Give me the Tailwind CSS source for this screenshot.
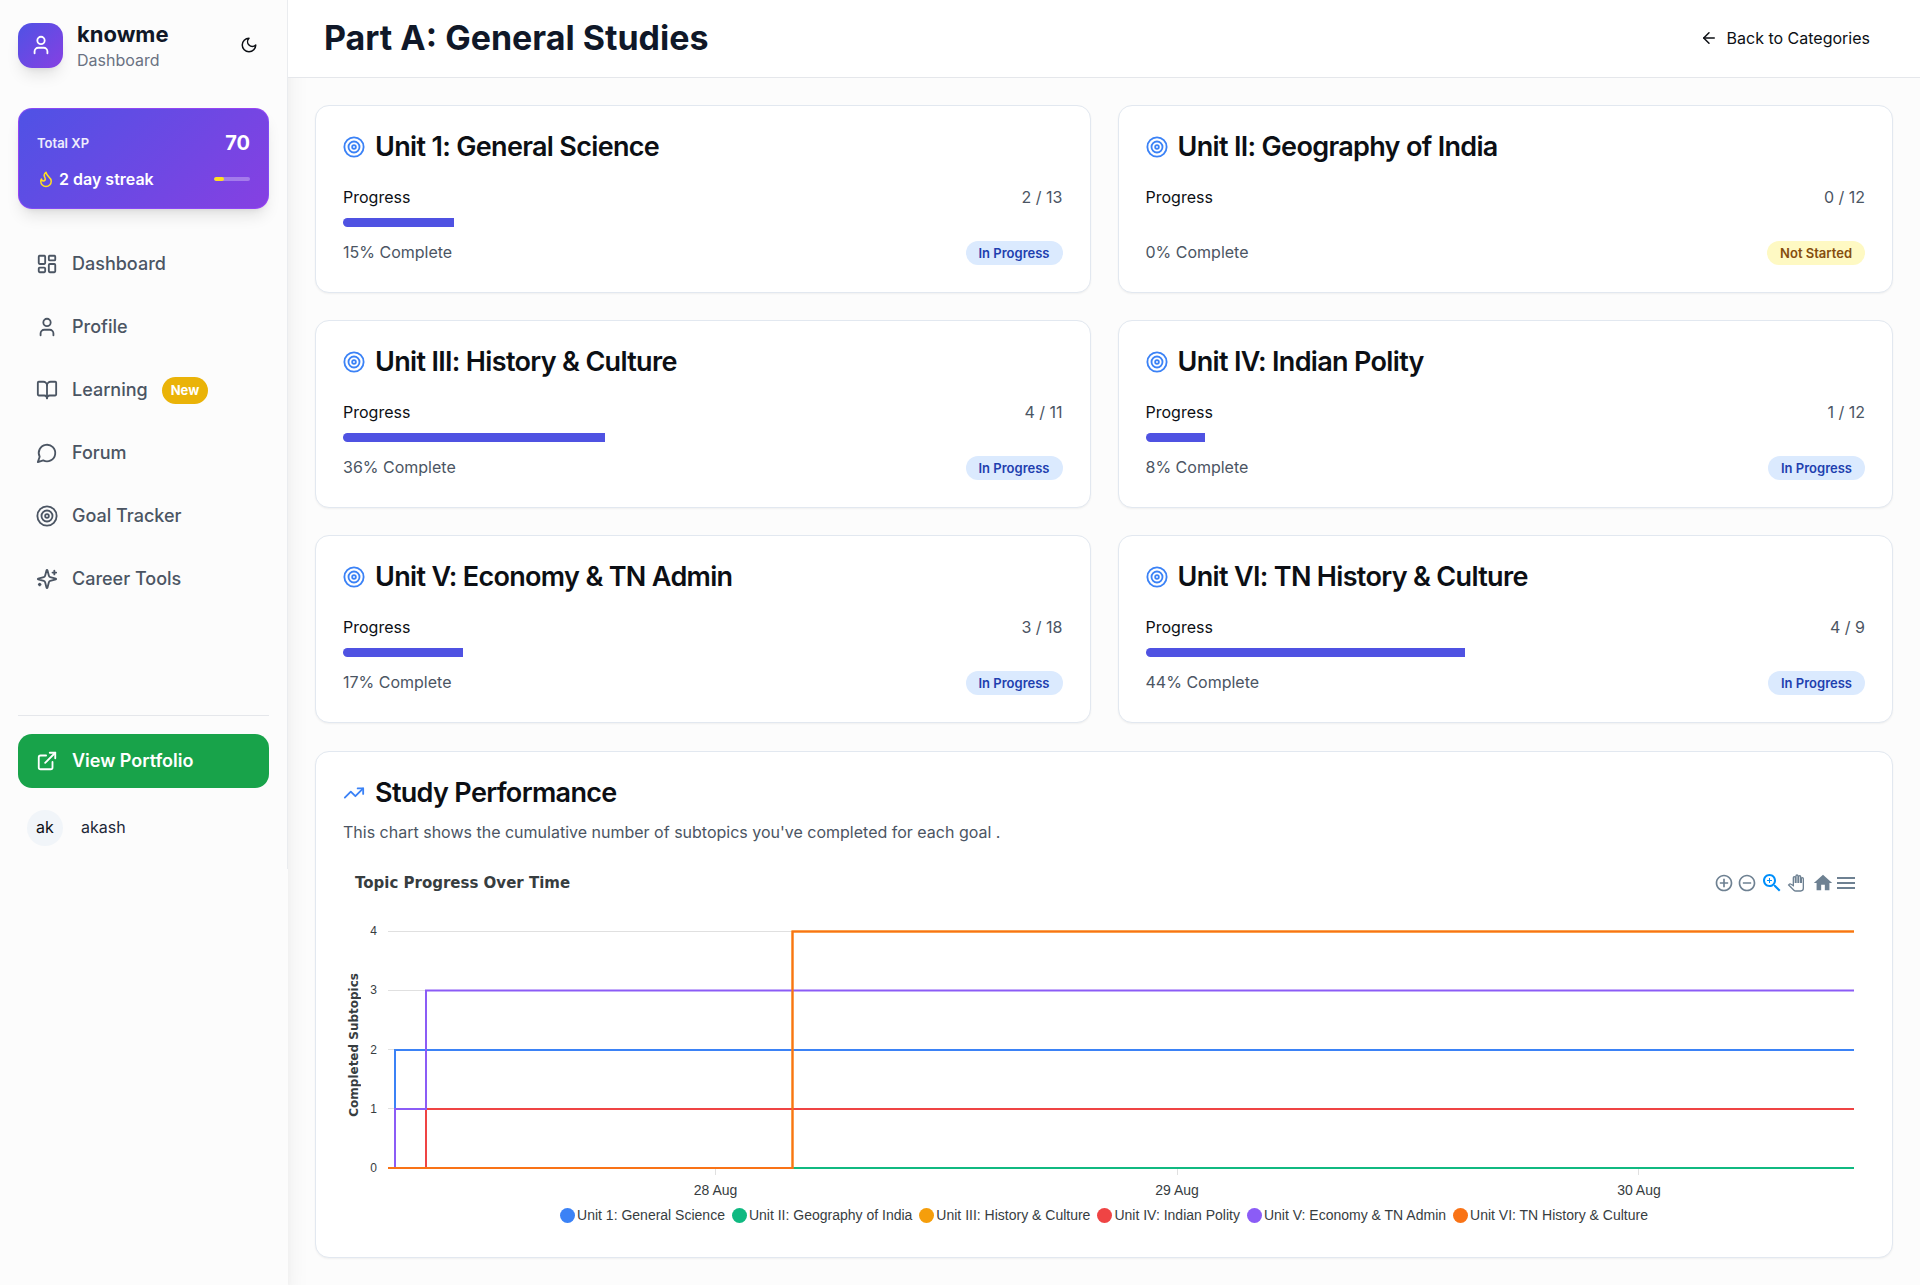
<!DOCTYPE html>
<html lang="en">
<head>
<meta charset="utf-8">
<meta name="viewport" content="width=device-width, initial-scale=1">
<title>Part A: General Studies</title>
<script src="https://cdn.jsdelivr.net/npm/@tailwindcss/browser@4"></script>
</head>
<body class="min-h-screen bg-[#fcfcfc] font-['Inter',sans-serif] text-[16px] leading-[20px] text-[#0c0f14]">

<svg class="hidden" aria-hidden="true">
  <symbol id="target" viewBox="0 0 24 24" fill="none" stroke="currentColor" stroke-width="2"><circle cx="12" cy="12" r="10.5"/><circle cx="12" cy="12" r="6"/><circle cx="12" cy="12" r="2"/></symbol>
  <symbol id="user" viewBox="0 0 24 24" fill="none" stroke="currentColor" stroke-width="2" stroke-linecap="round" stroke-linejoin="round"><path d="M19 21v-2a4 4 0 0 0-4-4H9a4 4 0 0 0-4 4v2"/><circle cx="12" cy="7" r="4"/></symbol>
</svg>

<div class="flex min-h-screen">
  <aside class="w-72 shrink-0 bg-[#fcfcfc] shadow-xl">
    <div class="flex flex-col border-r border-gray-200/80 px-[18px] pt-[18px] pb-[10px]">
      <div class="flex h-[54px] items-center gap-[14px]">
        <div class="flex size-[45px] items-center justify-center rounded-[14px] bg-linear-[135deg] from-[#4f52e5] to-[#8640e2] text-white shadow-lg">
          <svg class="size-[22px]"><use href="#user"/></svg>
        </div>
        <div class="flex-1 pb-[2px]">
          <p class="text-[22px] leading-[32px] font-bold text-gray-900">knowme</p>
          <p class="text-gray-500">Dashboard</p>
        </div>
        <button type="button" aria-label="Switch to dark mode" class="flex size-[40px] items-center justify-center">
          <svg class="size-[18px]" viewBox="0 0 24 24" fill="none" stroke="currentColor" stroke-width="2" stroke-linecap="round" stroke-linejoin="round"><path d="M12 3a6 6 0 0 0 9 9 9 9 0 1 1-9-9Z"/></svg>
        </button>
      </div>

      <section class="mt-[36px] rounded-[14px] border border-purple-500/50 bg-linear-[135deg] from-[#4f52e5] to-[#8640e2] p-[18px] text-white shadow-lg">
        <div class="flex h-[32px] items-center justify-between">
          <span class="text-[13px] font-semibold text-white/90">Total XP</span>
          <span class="text-[20px] font-bold">70</span>
        </div>
        <div class="mt-[9px] flex h-[22px] items-center justify-between">
          <span class="flex items-center gap-[4px] pb-[1px] font-semibold">
            <svg class="size-[18px] text-yellow-300" viewBox="0 0 24 24" fill="none" stroke="currentColor" stroke-width="2" stroke-linecap="round" stroke-linejoin="round"><path d="M8.500 14.500A2.500 2.500 0 0 0 11 12c0-1.380-.5-2-1-3-1.072-2.143-.224-4.054 2-6 .5 2.500 2 4.900 4 6.500 2 1.600 3 3.500 3 5.500a7 7 0 1 1-14 0c0-1.153.433-2.294 1-3a2.500 2.500 0 0 0 2.500 2.500z"/></svg>
            2 day streak
          </span>
          <span class="h-1 w-[36px] overflow-hidden rounded-full bg-white/30"><span class="block h-1 rounded-full bg-yellow-300" style="width:28%"></span></span>
        </div>
      </section>

      <nav class="mt-[28px] flex flex-col gap-[9px] text-[18px] font-medium text-[#4b5563]">
        <a href="#" class="flex h-[54px] items-center gap-[14px] px-[18px]">
          <svg class="size-[22px]" viewBox="0 0 24 24" fill="none" stroke="currentColor" stroke-width="2" stroke-linejoin="round"><rect x="3" y="3" width="7" height="9" rx="1"/><rect x="14" y="3" width="7" height="5" rx="1"/><rect x="14" y="12" width="7" height="9" rx="1"/><rect x="3" y="16" width="7" height="5" rx="1"/></svg>
          Dashboard
        </a>
        <a href="#" class="flex h-[54px] items-center gap-[14px] px-[18px]">
          <svg class="size-[22px]"><use href="#user"/></svg>
          Profile
        </a>
        <a href="#" class="flex h-[54px] items-center gap-[14px] px-[18px]">
          <svg class="size-[22px]" viewBox="0 0 24 24" fill="none" stroke="currentColor" stroke-width="2" stroke-linecap="round" stroke-linejoin="round"><path d="M12 7v14"/><path d="M3 18a1 1 0 0 1-1-1V4a1 1 0 0 1 1-1h5a4 4 0 0 1 4 4 4 4 0 0 1 4-4h5a1 1 0 0 1 1 1v13a1 1 0 0 1-1 1h-6a3 3 0 0 0-3 3 3 3 0 0 0-3-3z"/></svg>
          Learning
          <span class="rounded-full bg-[#eab308] px-[9px] py-[3px] text-[13px] leading-[21px] font-bold text-white">New</span>
        </a>
        <a href="#" class="flex h-[54px] items-center gap-[14px] px-[18px]">
          <svg class="size-[22px]" viewBox="0 0 24 24" fill="none" stroke="currentColor" stroke-width="2" stroke-linecap="round" stroke-linejoin="round"><path d="M7.900 20A9 9 0 1 0 4 16.100L2 22Z"/></svg>
          Forum
        </a>
        <a href="#" class="flex h-[54px] items-center gap-[14px] px-[18px]">
          <svg class="size-[22px]"><use href="#target"/></svg>
          Goal Tracker
        </a>
        <a href="#" class="flex h-[54px] items-center gap-[14px] px-[18px]">
          <svg class="size-[22px]" viewBox="0 0 24 24" fill="none" stroke="currentColor" stroke-width="2" stroke-linecap="round" stroke-linejoin="round"><path d="M9.937 15.500A2 2 0 0 0 8.500 14.063l-6.135-1.582a.5.5 0 0 1 0-.962L8.500 9.936A2 2 0 0 0 9.937 8.500l1.582-6.135a.5.5 0 0 1 .963 0L14.063 8.500A2 2 0 0 0 15.500 9.937l6.135 1.581a.5.5 0 0 1 0 .964L15.500 14.063a2 2 0 0 0-1.437 1.437l-1.582 6.135a.5.5 0 0 1-.963 0z"/><path d="M20 3v4"/><path d="M22 5h-4"/><path d="M4 17v2"/><path d="M5 18H3"/></svg>
          Career Tools
        </a>
      </nav>

      <div class="mt-[109px] border-t border-gray-200 pt-[18px]">
        <a href="#" class="flex h-[54px] items-center gap-[14px] rounded-[14px] bg-[#18a34a] px-[18px] text-[18px] font-semibold text-white">
          <svg class="size-[22px]" viewBox="0 0 24 24" fill="none" stroke="currentColor" stroke-width="2" stroke-linecap="round" stroke-linejoin="round"><path d="M15 3h6v6"/><path d="M10 14 21 3"/><path d="M18 13v6a2 2 0 0 1-2 2H5a2 2 0 0 1-2-2V8a2 2 0 0 1 2-2h6"/></svg>
          View Portfolio
        </a>
        <button type="button" class="mt-[9px] flex h-[62px] w-full items-center gap-[18px] px-[9px]">
          <span class="flex size-[36px] items-center justify-center rounded-full bg-slate-100 pb-[2px]">ak</span>
          <span class="pb-[2px] text-gray-800">akash</span>
        </button>
      </div>
    </div>
  </aside>

  <div class="min-w-0 flex-1">
    <header class="relative flex h-[78px] items-center justify-between border-b border-gray-200 bg-white px-[36px] pb-[2px]">
      <h1 class="text-[34px] leading-[40px] font-bold text-gray-900">Part A: General Studies</h1>
      <a href="#" class="flex items-center gap-[9px] px-[14px]">
        <svg class="size-[18px]" viewBox="0 0 24 24" fill="none" stroke="currentColor" stroke-width="2" stroke-linecap="round" stroke-linejoin="round"><path d="m12 19-7-7 7-7"/><path d="M19 12H5"/></svg>
        Back to Categories
      </a>
    </header>

    <main class="p-[27px]">
      <div class="grid grid-cols-2 gap-[27px]">
        <article class="rounded-[14px] border border-slate-200 bg-white p-[27px] shadow-xs">
          <h2 class="flex items-center gap-[10px] text-[27px] leading-[27px] font-semibold tracking-tight"><svg class="size-[22px] text-[#3b82f6]"><use href="#target"/></svg>Unit 1: General Science</h2>
          <div class="mt-[27px] flex justify-between"><span>Progress</span><span class="text-[#4b5563]">2 / 13</span></div>
          <div class="mt-[11px] h-[9px] overflow-hidden rounded-full"><div class="h-full bg-[#4f52e2]" style="width:15.38%"></div></div>
          <div class="mt-[14px] flex justify-between"><span class="leading-[22px] text-[#4b5563]">15% Complete</span><span class="rounded-full bg-[#dbeafe] px-[13px] text-[13px] leading-[24px] font-semibold text-[#1e40af]">In Progress</span></div>
        </article>
        <article class="rounded-[14px] border border-slate-200 bg-white p-[27px] shadow-xs">
          <h2 class="flex items-center gap-[10px] text-[27px] leading-[27px] font-semibold tracking-tight"><svg class="size-[22px] text-[#3b82f6]"><use href="#target"/></svg>Unit II: Geography of India</h2>
          <div class="mt-[27px] flex justify-between"><span>Progress</span><span class="text-[#4b5563]">0 / 12</span></div>
          <div class="mt-[11px] h-[9px] overflow-hidden rounded-full"><div class="h-full bg-[#4f52e2]" style="width:0%"></div></div>
          <div class="mt-[14px] flex justify-between"><span class="leading-[22px] text-[#4b5563]">0% Complete</span><span class="rounded-full bg-[#fef9c3] px-[13px] text-[13px] leading-[24px] font-semibold text-[#854d0e]">Not Started</span></div>
        </article>
        <article class="rounded-[14px] border border-slate-200 bg-white p-[27px] shadow-xs">
          <h2 class="flex items-center gap-[10px] text-[27px] leading-[27px] font-semibold tracking-tight"><svg class="size-[22px] text-[#3b82f6]"><use href="#target"/></svg>Unit III: History &amp; Culture</h2>
          <div class="mt-[27px] flex justify-between"><span>Progress</span><span class="text-[#4b5563]">4 / 11</span></div>
          <div class="mt-[11px] h-[9px] overflow-hidden rounded-full"><div class="h-full bg-[#4f52e2]" style="width:36.36%"></div></div>
          <div class="mt-[14px] flex justify-between"><span class="leading-[22px] text-[#4b5563]">36% Complete</span><span class="rounded-full bg-[#dbeafe] px-[13px] text-[13px] leading-[24px] font-semibold text-[#1e40af]">In Progress</span></div>
        </article>
        <article class="rounded-[14px] border border-slate-200 bg-white p-[27px] shadow-xs">
          <h2 class="flex items-center gap-[10px] text-[27px] leading-[27px] font-semibold tracking-tight"><svg class="size-[22px] text-[#3b82f6]"><use href="#target"/></svg>Unit IV: Indian Polity</h2>
          <div class="mt-[27px] flex justify-between"><span>Progress</span><span class="text-[#4b5563]">1 / 12</span></div>
          <div class="mt-[11px] h-[9px] overflow-hidden rounded-full"><div class="h-full bg-[#4f52e2]" style="width:8.33%"></div></div>
          <div class="mt-[14px] flex justify-between"><span class="leading-[22px] text-[#4b5563]">8% Complete</span><span class="rounded-full bg-[#dbeafe] px-[13px] text-[13px] leading-[24px] font-semibold text-[#1e40af]">In Progress</span></div>
        </article>
        <article class="rounded-[14px] border border-slate-200 bg-white p-[27px] shadow-xs">
          <h2 class="flex items-center gap-[10px] text-[27px] leading-[27px] font-semibold tracking-tight"><svg class="size-[22px] text-[#3b82f6]"><use href="#target"/></svg>Unit V: Economy &amp; TN Admin</h2>
          <div class="mt-[27px] flex justify-between"><span>Progress</span><span class="text-[#4b5563]">3 / 18</span></div>
          <div class="mt-[11px] h-[9px] overflow-hidden rounded-full"><div class="h-full bg-[#4f52e2]" style="width:16.67%"></div></div>
          <div class="mt-[14px] flex justify-between"><span class="leading-[22px] text-[#4b5563]">17% Complete</span><span class="rounded-full bg-[#dbeafe] px-[13px] text-[13px] leading-[24px] font-semibold text-[#1e40af]">In Progress</span></div>
        </article>
        <article class="rounded-[14px] border border-slate-200 bg-white p-[27px] shadow-xs">
          <h2 class="flex items-center gap-[10px] text-[27px] leading-[27px] font-semibold tracking-tight"><svg class="size-[22px] text-[#3b82f6]"><use href="#target"/></svg>Unit VI: TN History &amp; Culture</h2>
          <div class="mt-[27px] flex justify-between"><span>Progress</span><span class="text-[#4b5563]">4 / 9</span></div>
          <div class="mt-[11px] h-[9px] overflow-hidden rounded-full"><div class="h-full bg-[#4f52e2]" style="width:44.44%"></div></div>
          <div class="mt-[14px] flex justify-between"><span class="leading-[22px] text-[#4b5563]">44% Complete</span><span class="rounded-full bg-[#dbeafe] px-[13px] text-[13px] leading-[24px] font-semibold text-[#1e40af]">In Progress</span></div>
        </article>
      </div>

      <section class="mt-[28px] rounded-[14px] border border-slate-200 bg-white p-[27px] shadow-xs">
        <h2 class="flex items-center gap-[10px] text-[27px] leading-[27px] font-semibold tracking-tight">
          <svg class="size-[22px] text-[#3b82f6]" viewBox="0 0 24 24" fill="none" stroke="currentColor" stroke-width="2" stroke-linecap="round" stroke-linejoin="round"><path d="m22 7-8.500 8.500-5-5L2 17"/><path d="M16 7h6v6"/></svg>
          Study Performance
        </h2>
        <p class="mt-[15px] leading-[22px] text-[#4b5563]">This chart shows the cumulative number of subtopics you've completed for each goal .</p>

        <div class="mt-[26px] font-['Liberation_Sans',Arial,sans-serif] text-[14px] leading-[20px] text-[#373d3f]">
          <div class="flex h-[27px] items-center justify-between pr-[7px] pl-[12px]">
            <h3 class="font-['DejaVu_Sans',sans-serif] text-[15px] font-bold">Topic Progress Over Time</h3>
            <div class="flex items-center text-[#6e8192]">
              <button type="button" aria-label="Zoom in" class="mr-[3px]"><svg class="size-[20px]" viewBox="0 0 24 24" fill="currentColor"><path d="M13 7h-2v4H7v2h4v4h2v-4h4v-2h-4V7zm-1-5C6.480 2 2 6.480 2 12s4.480 10 10 10 10-4.480 10-10S17.520 2 12 2zm0 18c-4.410 0-8-3.590-8-8s3.590-8 8-8 8 3.590 8 8-3.590 8-8 8z"/></svg></button>
              <button type="button" aria-label="Zoom out" class="mr-[3px]"><svg class="size-[20px]" viewBox="0 0 24 24" fill="currentColor"><path d="M7 11v2h10v-2H7zm5-9C6.480 2 2 6.480 2 12s4.480 10 10 10 10-4.480 10-10S17.520 2 12 2zm0 18c-4.410 0-8-3.590-8-8s3.590-8 8-8 8 3.590 8 8-3.590 8-8 8z"/></svg></button>
              <button type="button" aria-label="Selection zoom" class="text-[#008ffb]"><svg class="size-[24px]" viewBox="0 0 24 24" fill="currentColor"><path d="M15.500 14h-.79l-.28-.27C15.410 12.590 16 11.110 16 9.500 16 5.910 13.090 3 9.500 3S3 5.910 3 9.500 5.910 16 9.500 16c1.610 0 3.090-.59 4.230-1.570l.27.28v.79l5 4.990L20.490 19l-4.990-5zm-6 0C7.010 14 5 11.990 5 9.500S7.010 5 9.500 5 14 7.010 14 9.500 11.990 14 9.500 14z"/><path d="M12 10h-2v2H9v-2H7V9h2V7h1v2h2v1z"/></svg></button>
              <button type="button" aria-label="Panning" class="mr-[4px] flex size-[24px] items-center justify-center"><svg class="size-[16px] overflow-visible" viewBox="0 0 24 24" fill="#fefefe" stroke="currentColor" stroke-width="2"><path d="M23 5.500V20c0 2.200-1.800 4-4 4h-7.300c-1.080 0-2.100-.43-2.850-1.190L1 14.830s1.260-1.230 1.300-1.250c.22-.19.49-.29.79-.29.22 0 .42.06.6.16.04.01 4.310 2.460 4.310 2.460V4c0-.83.67-1.500 1.500-1.500S11 3.170 11 4v7h1V1.500c0-.83.67-1.500 1.500-1.500S15 .67 15 1.500V11h1V2.500c0-.83.67-1.500 1.500-1.500s1.500.67 1.500 1.500V11h1V5.500c0-.83.67-1.500 1.500-1.500s1.500.67 1.500 1.500z"/></svg></button>
              <button type="button" aria-label="Reset zoom"><svg class="size-[22px]" viewBox="0 0 24 24" fill="currentColor"><path d="M10 20v-6h4v6h5v-8h3L12 3 2 12h3v8z"/></svg></button>
              <button type="button" aria-label="Chart menu"><svg class="size-[24px]" viewBox="0 0 24 24" fill="currentColor"><path d="M3 18h18v-2H3v2zm0-5h18v-2H3v2zm0-7v2h18V6H3z"/></svg></button>
            </div>
          </div>

          <div class="mt-[25px] flex h-[257px] pr-[11px]">
            <div class="mr-[2px] flex w-[22px] items-center justify-center pb-[9px]">
              <span class="rotate-180 font-['DejaVu_Sans',sans-serif] text-[12px] font-bold whitespace-nowrap [writing-mode:vertical-rl]">Completed Subtopics</span>
            </div>
            <div class="mr-[11px] flex w-[10px] flex-col justify-between text-right text-[12px]">
              <span>4</span><span>3</span><span>2</span><span>1</span><span>0</span>
            </div>
            <div class="min-w-0 flex-1 py-[10px]">
              <svg class="block h-[237px] w-full overflow-visible" viewBox="0 0 1466 237" preserveAspectRatio="none" fill="none" stroke-width="2" role="img" aria-label="Completed subtopics per unit, 27 to 30 August">
                <g stroke="#e0e0e0" stroke-width="1">
                  <path vector-effect="non-scaling-stroke" d="M0 .5H1466M0 59.500H1466M0 118.500H1466M0 177.500H1466M0 237H1466"/>
                  <path vector-effect="non-scaling-stroke" d="M327.500 237v7M789.500 237v7M1250.500 237v7"/>
                </g>
                <path vector-effect="non-scaling-stroke" stroke="#3b82f6" d="M0 237H7V119H1466"/>
                <path vector-effect="non-scaling-stroke" stroke="#10b981" d="M0 237H1466"/>
                <path vector-effect="non-scaling-stroke" stroke="#f59e0b" d="M0 237H404.500V.5H1466"/>
                <path vector-effect="non-scaling-stroke" stroke="#ef4444" d="M0 237H38V178H1466"/>
                <path vector-effect="non-scaling-stroke" stroke="#8b5cf6" d="M0 237H7V178H38V59.500H1466"/>
                <path vector-effect="non-scaling-stroke" stroke="#f97316" d="M0 237H404.500V.5H1466"/>
              </svg>
            </div>
          </div>

          <div class="relative mt-[2px] mr-[11px] ml-[45px] h-[20px]">
            <span class="absolute -translate-x-1/2 whitespace-nowrap" style="left:22.34%">28 Aug</span>
            <span class="absolute -translate-x-1/2 whitespace-nowrap" style="left:53.82%">29 Aug</span>
            <span class="absolute -translate-x-1/2 whitespace-nowrap" style="left:85.33%">30 Aug</span>
          </div>

          <ul class="mt-[5px] flex flex-wrap justify-center gap-x-[7px] pb-[5px]">
            <li class="flex items-center gap-[2px]"><span class="size-[15px] rounded-full bg-[#3b82f6]"></span>Unit 1: General Science</li>
            <li class="flex items-center gap-[2px]"><span class="size-[15px] rounded-full bg-[#10b981]"></span>Unit II: Geography of India</li>
            <li class="flex items-center gap-[2px]"><span class="size-[15px] rounded-full bg-[#f59e0b]"></span>Unit III: History &amp; Culture</li>
            <li class="flex items-center gap-[2px]"><span class="size-[15px] rounded-full bg-[#ef4444]"></span>Unit IV: Indian Polity</li>
            <li class="flex items-center gap-[2px]"><span class="size-[15px] rounded-full bg-[#8b5cf6]"></span>Unit V: Economy &amp; TN Admin</li>
            <li class="flex items-center gap-[2px]"><span class="size-[15px] rounded-full bg-[#f97316]"></span>Unit VI: TN History &amp; Culture</li>
          </ul>
        </div>
      </section>
    </main>
  </div>
</div>
</body>
</html>
